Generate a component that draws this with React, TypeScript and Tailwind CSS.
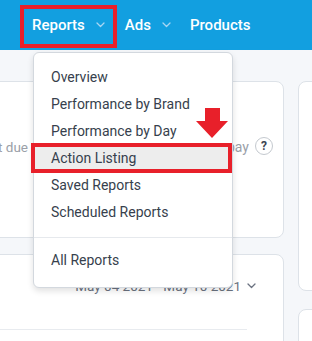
import React from "react";

const Chevron = ({ className }: { className?: string }) => (
  <svg className={className} width="9" height="6" viewBox="0 0 9 6" fill="none">
    <path d="M1 1l3.5 3.5L8 1" stroke="currentColor" strokeWidth="1.3" strokeLinecap="round" strokeLinejoin="round" />
  </svg>
);

const items = ["Overview", "Performance by Brand", "Performance by Day", "Action Listing", "Saved Reports", "Scheduled Reports"];

export default function App() {
  return (
    <div
      className="relative w-[312px] h-[341px] overflow-hidden bg-[#f5f7fa]"
      style={{ fontFamily: "Roboto, 'Noto Sans', Arial, sans-serif" }}
    >
      {/* Header */}
      <div className="h-[50px] bg-[#129fe0] flex items-center pl-[32px] text-white text-[15px] font-medium">
        <div className="flex items-center">
          <span>Reports</span>
          <Chevron className="ml-[11px] text-[#a9d6f2]" />
        </div>
        <div className="flex items-center ml-[20px]">
          <span>Ads</span>
          <Chevron className="ml-[11px] text-[#a9d6f2]" />
        </div>
        <div className="ml-[19px]">Products</div>
      </div>

      {/* Content */}
      <div className="flex gap-[14px] ml-[-60px] pt-[31px]">
        <div className="w-[344px] shrink-0 flex flex-col gap-[16px]">
          <div className="flex gap-[14px] h-[157px]">
            <div className="flex-1 bg-white border border-[#dde2e8] rounded-[8px] flex items-start justify-end pt-[55px] pr-[77px] text-[13.5px] text-[#9aa0a8]">
              Not due
            </div>
            <div className="w-[164px] bg-white border border-[#dde2e8] rounded-[8px] flex items-start justify-end pt-[55px] pr-[10px] text-[14px] text-[#9aa0a8]">
              <span>Amount to pay</span>
              <span className="ml-[6px] w-[18px] h-[18px] rounded-full border border-[#c4c9cf] text-[#3c4453] text-[12px] font-bold flex items-center justify-center">?</span>
            </div>
          </div>
          <div className="h-[120px] bg-white border border-[#dde2e8] rounded-[8px] pt-[21px]">
            <div className="flex items-center justify-end pr-[27px] text-[13.5px] text-[#6b7280]">
              <span>May 04 2021 - May 10 2021</span>
              <Chevron className="ml-[6px] text-[#6b7280]" />
            </div>
            <div className="mt-[33px] mr-[36px] border-t border-[#e8ebef]" />
          </div>
        </div>
        <div className="w-[60px] shrink-0 flex flex-col gap-[18px]">
          <div className="h-[210px] bg-white border border-[#dde2e8] rounded-[8px]" />
          <div className="h-[80px] bg-white border border-[#dde2e8] rounded-[8px]" />
        </div>
      </div>

      {/* Dropdown menu */}
      <div className="absolute left-[33px] top-[52px] w-[200px] bg-white border border-[#d3d8de] rounded-[6px] shadow-[0_3px_6px_rgba(0,0,0,0.12)] pt-[11px] pb-[13px] text-[14px] text-[#373f4d]">
        {items.map((it) => (
          <div
            key={it}
            className={`h-[27px] flex items-center pl-[17px] ${it === "Action Listing" ? "bg-[#ededed]" : ""}`}
          >
            {it}
          </div>
        ))}
        <div className="mt-[11px] mb-[9px] border-t border-[#e6e9ed]" />
        <div className="h-[27px] flex items-center pl-[17px]">All Reports</div>
      </div>

      {/* Annotations */}
      <div className="absolute left-[20px] top-[5px] w-[97px] h-[43px] border-[4px] border-[#e8202a]" />
      <div className="absolute left-[31px] top-[143px] w-[201px] h-[30px] border-[4px] border-[#e8202a]" />
      <svg className="absolute left-[196px] top-[108px]" width="32" height="31" viewBox="0 0 32 31">
        <path d="M9 0h15v13h8L16 30 0 13h9z" fill="#e8202a" />
      </svg>
    </div>
  );
}
